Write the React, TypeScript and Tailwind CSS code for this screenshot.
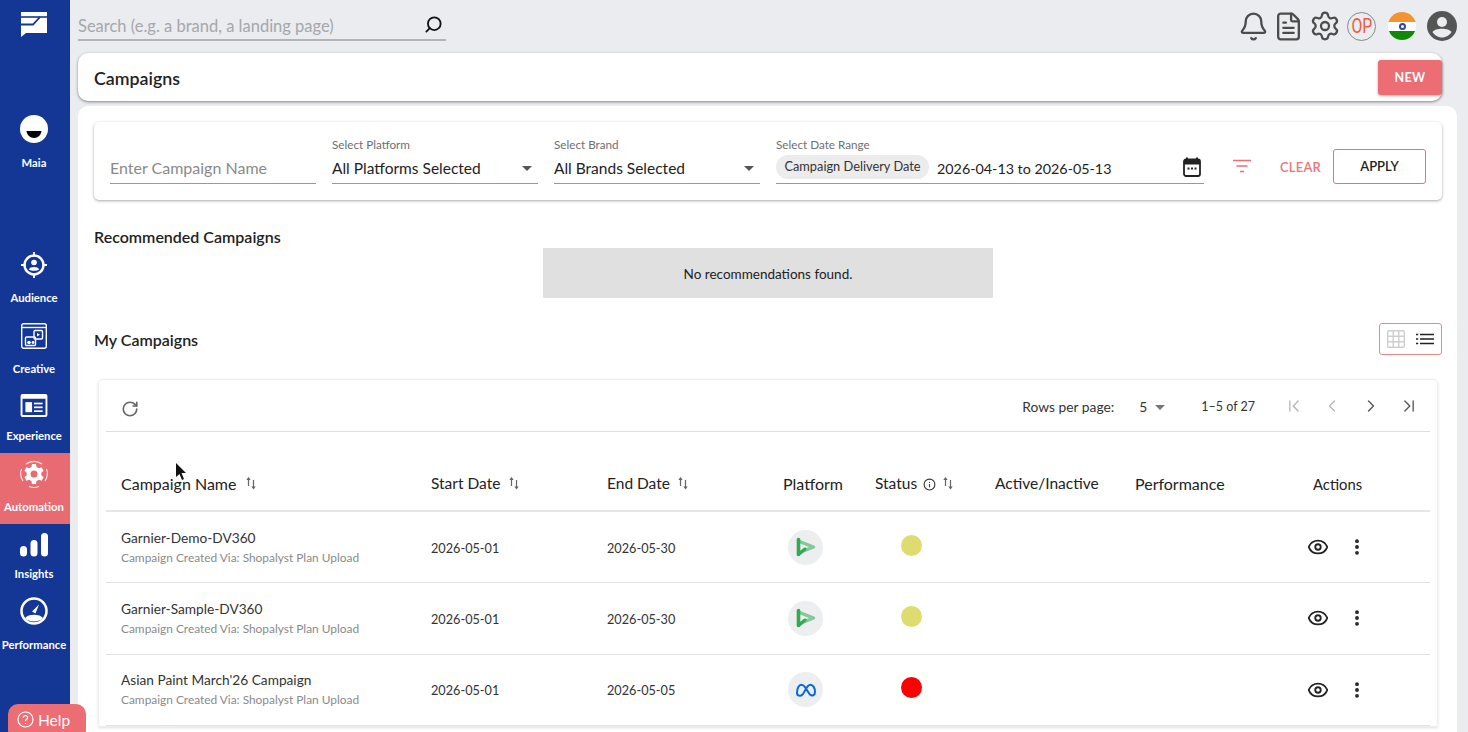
import React from "react";
import { Bell, FileText, Settings, Search, RotateCw, ChevronLeft, ChevronRight, ChevronFirst, ChevronLast, Eye, EllipsisVertical, Info } from "lucide-react";

const Logo = () => (
  <svg width="26" height="25" viewBox="0 0 26 25">
    <path d="M0 0H26V21H5L0 25Z" fill="white" />
    <path d="M0 5H26" stroke="#143694" strokeWidth="1.600" />
    <path d="M19 5L12 12.500H0" fill="none" stroke="#143694" strokeWidth="1.800" />
  </svg>
);
const Maia = () => (
  <svg width="28" height="28" viewBox="0 0 28 28">
    <circle cx="14" cy="14" r="14" fill="white" />
    <path d="M6.500 16H21.500C21 20 18 23 14 23C10 23 7 20 6.500 16Z" fill="black" />
  </svg>
);
const Audience = () => (
  <svg width="26" height="26" viewBox="0 0 26 26" fill="none" stroke="white">
    <circle cx="13" cy="13" r="9.500" strokeWidth="2.400" />
    <path d="M13 0V4.500M13 21.500V26M0 13H4.500M21.500 13H26" strokeWidth="1.800" />
    <circle cx="13" cy="10.500" r="2.800" fill="white" stroke="none" />
    <path d="M7.800 17.500C8.800 14.200 17.200 14.200 18.200 17.500C16 19.300 10 19.300 7.800 17.500Z" fill="white" stroke="none" />
  </svg>
);
const Creative = () => (
  <svg width="26" height="26" viewBox="0 0 26 26" fill="none" stroke="white" strokeWidth="1.400">
    <rect x="0.700" y="0.700" width="24.600" height="24.600" rx="2" />
    <path d="M1 4.500H25" />
    <rect x="13" y="7.500" width="8.500" height="8.500" rx="1" />
    <path d="M16 10L19 11.800L16 13.600Z" fill="white" stroke="none" />
    <rect x="4.500" y="14" width="10" height="8.500" rx="1" />
    <circle cx="8" cy="19.500" r="1.800" fill="white" stroke="none" />
    <circle cx="12" cy="19.500" r="1.400" fill="white" stroke="none" />
  </svg>
);
const Experience = () => (
  <svg width="28" height="23" viewBox="0 0 28 24" fill="white">
    <path fillRule="evenodd" d="M2 0H26A2 2 0 0 1 28 2V22A2 2 0 0 1 26 24H2A2 2 0 0 1 0 22V2A2 2 0 0 1 2 0ZM2 5V22H26V5Z" />
    <rect x="5" y="8.500" width="7" height="10.500" />
    <rect x="14" y="9" width="9" height="1.800" />
    <rect x="14" y="13" width="9" height="1.800" />
    <rect x="14" y="17" width="9" height="1.800" />
  </svg>
);
const Automation = () => (
  <svg width="30" height="30" viewBox="0 0 30 30" fill="none">
    <path d="M7 5A13.500 13.500 0 0 1 23 5M27.500 10A13.500 13.500 0 0 1 26 22M4 22A13.500 13.500 0 0 1 2.500 10M10 27.500A13.500 13.500 0 0 0 20 27.500" stroke="white" strokeWidth="1.100" strokeOpacity="0.850" />
    <path fill="white" fillRule="evenodd" d="M13 5H17L17.600 8A7.500 7.500 0 0 1 19.600 9.200L22.600 8.200L24.600 11.700L22.300 13.700A7.500 7.500 0 0 1 22.300 16.300L24.600 18.300L22.600 21.800L19.600 20.800A7.500 7.500 0 0 1 17.600 22L17 25H13L12.400 22A7.500 7.500 0 0 1 10.400 20.800L7.400 21.800L5.400 18.300L7.700 16.300A7.500 7.500 0 0 1 7.700 13.700L5.400 11.700L7.400 8.200L10.400 9.200A7.500 7.500 0 0 1 12.400 8ZM15 11.500A3.500 3.500 0 1 0 15 18.500A3.500 3.500 0 1 0 15 11.500Z" />
  </svg>
);
const Insights = () => (
  <svg width="28" height="24" viewBox="0 0 28 24" fill="white">
    <rect x="0" y="13" width="7" height="10.500" rx="3.500" />
    <rect x="10.500" y="7" width="7" height="16.500" rx="3.500" />
    <rect x="21" y="0" width="7" height="23.500" rx="3.500" />
  </svg>
);
const Perf = () => (
  <svg width="28" height="28" viewBox="0 0 28 28" fill="none">
    <circle cx="14" cy="14" r="12.500" stroke="white" strokeWidth="2.600" />
    <path d="M5 21C8 16.500 20 16.500 23 21C20 25.500 8 25.500 5 21Z" fill="white" />
    <path d="M12 14.500L19 7.500L15.500 16.500Z" fill="white" />
  </svg>
);

const SortIcon = () => (
  <svg width="12" height="15" viewBox="0 0 12 15" fill="none" stroke="#666" strokeWidth="1.200" className="-translate-y-[1px]">
    <path d="M3.500 10V2" />
    <path d="M1.300 4L3.500 1L5.700 4Z" fill="#666" stroke="none" />
    <path d="M8.500 4V12" />
    <path d="M6.300 10.500L8.500 13.500L10.700 10.500Z" fill="#666" stroke="none" />
  </svg>
);
const Dv = () => (
  <svg width="22" height="22" viewBox="0 0 22 22">
    <path d="M4.500 5.500L18.500 11L4.500 16.500" fill="none" stroke="#81c995" strokeWidth="3.400" strokeLinejoin="round" strokeLinecap="round" />
    <path d="M3.500 3.500V18.500" stroke="#34a853" strokeWidth="3.600" strokeLinecap="round" />
    <path d="M3.500 18.500L10 13" stroke="#34a853" strokeWidth="3" strokeLinecap="round" />
  </svg>
);
const Meta = () => (
  <svg width="22" height="14" viewBox="0 0 22 14" fill="none">
    <path d="M2 10C2 5 4 1.800 6.500 1.800C10 1.800 12.500 9 15 11.500C17 13.300 20 12.500 20 9C20 5 18 1.800 15.500 1.800C11.500 1.800 10 9 7.500 11.500C5.500 13.500 2 13 2 10Z" stroke="#0668e1" strokeWidth="2" />
  </svg>
);
const Cal = () => (
  <svg width="18" height="20" viewBox="0 0 18 20">
    <path d="M4 0.500V3M14 0.500V3" stroke="#222" strokeWidth="2" />
    <rect x="1" y="2.500" width="16" height="16.500" rx="2" fill="none" stroke="#222" strokeWidth="1.800" />
    <rect x="1" y="2.500" width="16" height="5" fill="#222" />
    <path d="M4.500 11.500H6.500M8 11.500H10M11.500 11.500H13.500" stroke="#222" strokeWidth="2" />
  </svg>
);

const Caret = ({ c = "#555" }: { c?: string }) => (
  <div className="h-0 w-0 border-l-[5px] border-r-[5px] border-t-[5px] border-l-transparent border-r-transparent" style={{ borderTopColor: c }} />
);

const navs = [
  { l: "Audience", I: Audience, h: "h-[71px]", g: "mb-[13px]" },
  { l: "Creative", I: Creative, h: "h-[71px]", g: "mb-[13px]" },
  { l: "Experience", I: Experience, h: "h-[67px]", g: "mb-[12px]" },
  { l: "Automation", I: Automation, h: "h-[71px] bg-[#e76b71]", g: "mb-[11px]" },
  { l: "Insights", I: Insights, h: "h-[67px]", g: "mb-[10px]" },
  { l: "Performance", I: Perf, h: "h-[71px]", g: "mb-[13px]" },
];

const rows = [
  { n: "Garnier-Demo-DV360", e: "2026-05-30", p: "dv", c: "bg-[#dedc6f]" },
  { n: "Garnier-Sample-DV360", e: "2026-05-30", p: "dv", c: "bg-[#dedc6f]" },
  { n: "Asian Paint March'26 Campaign", e: "2026-05-05", p: "meta", c: "bg-[#ff0000]" },
];

const cols = "grid grid-cols-[325px_176px_177px_91px_120px_140px_178px_1fr]";

export default function App() {
  return (
    <div className="relative flex h-[732px] w-[1468px] overflow-hidden bg-[#eaecf0] font-['Lato',sans-serif] text-[#222]">
      <aside className="flex w-[70px] shrink-0 flex-col bg-[#143694] text-white">
        <div className="flex h-[109px] justify-center pr-[2px] pt-[12px]"><Logo /></div>
        <div className="flex h-[71px] flex-col items-center justify-end pb-[10px] pr-[2px]">
          <div className="mb-[13px]"><Maia /></div>
          <span className="text-[11.300px] font-bold leading-[14px]">Maia</span>
        </div>
        <div className="h-[64px]" />
        {navs.map(({ l, I, h, g }) => (
          <div key={l} className={`flex flex-col items-center justify-end pb-[10px] pr-[2px] ${h}`}>
            <div className={g}><I /></div>
            <span className="text-[11.300px] font-bold leading-[14px]">{l}</span>
          </div>
        ))}
      </aside>

      <main className="flex min-w-0 flex-1 flex-col pl-[8px]">
        <header className="flex h-[53px] shrink-0 items-start justify-between pr-[11px]">
          <div className="mt-[13px] flex h-[28px] w-[368px] items-center justify-between border-b-2 border-[#b4b4b6] pr-[3px]">
            <span className="text-[16.500px] text-[#a5a7aa]">Search (e.g. a brand, a landing page)</span>
            <Search size={19} strokeWidth={2.300} className="mb-[3px] -scale-x-100 text-[#111]" />
          </div>
          <div className="mt-[10px] flex items-center">
            <Bell size={31} strokeWidth={1.800} className="text-[#4c4c4c]" />
            <FileText size={31} strokeWidth={1.800} className="ml-[4px] text-[#4c4c4c]" />
            <Settings size={32} strokeWidth={1.700} className="ml-[5px] text-[#4c4c4c]" />
            <div className="ml-[6px] flex h-[29px] w-[29px] items-center justify-center rounded-full border border-[#888] font-['Roboto',sans-serif] text-[21px] font-normal leading-none text-[#ee5a3e]"><span className="scale-x-75">OP</span></div>
            <div className="ml-[12px] flex h-[28px] w-[28px] flex-col overflow-hidden rounded-full">
              <div className="h-[10px] bg-[#f59331]" />
              <div className="flex h-[9px] items-center justify-center bg-white"><div className="h-[7px] w-[7px] rounded-full border-2 border-[#2e4a9e]" /></div>
              <div className="h-[9px] bg-[#128807]" />
            </div>
            <svg className="ml-[11px]" width="30" height="30" viewBox="0 0 30 30">
              <circle cx="15" cy="15" r="15" fill="#555" />
              <circle cx="15" cy="11" r="5" fill="#eaecf0" />
              <path d="M5.500 21C8 16.500 22 16.500 24.500 21C22 25 18 26.500 15 26.500C12 26.500 8 25 5.500 21Z" fill="#eaecf0" />
            </svg>
          </div>
        </header>

        <div className="mr-[26px] flex h-[48px] shrink-0 items-center justify-between rounded-[10px] bg-white pl-[16px] shadow-[0_1px_3px_rgba(0,0,0,0.45)]">
          <h1 className="pt-[2px] text-[17.800px] font-semibold text-[#222]">Campaigns</h1>
          <button className="h-[35px] w-[64px] rounded-[3px] bg-[#ec6d74] pt-[2px] text-[12.500px] font-bold tracking-[0.3px] text-white shadow-[0_1px_3px_rgba(0,0,0,0.3)]">NEW</button>
        </div>

        <div className="mr-[11px] mt-[5px] min-h-0 flex-1 overflow-hidden rounded-t-[10px] bg-white pl-[16px] pr-[15px] pt-[16px]">
          <section className="flex h-[78px] items-start rounded-[5px] bg-white pl-[16px] shadow-[0_1px_3px_rgba(0,0,0,0.35)]">
            <div className="mt-[28px] flex h-[34px] w-[206px] items-center border-b border-[#999] pt-[3px] text-[16px] text-[#8a8a8a]">Enter Campaign Name</div>
            <div className="ml-[16px] mt-[15px] w-[206px]">
              <div className="text-[11.700px] leading-[14px] text-[#6f6f6f]">Select Platform</div>
              <div className="flex h-[33px] items-center justify-between border-b border-[#999] pr-[6px] pt-[3px] text-[15.500px] text-[#222]">All Platforms Selected <Caret /></div>
            </div>
            <div className="ml-[16px] mt-[15px] w-[206px]">
              <div className="text-[11.700px] leading-[14px] text-[#6f6f6f]">Select Brand</div>
              <div className="flex h-[33px] items-center justify-between border-b border-[#999] pr-[6px] pt-[3px] text-[15.500px] text-[#222]">All Brands Selected <Caret /></div>
            </div>
            <div className="ml-[16px] mt-[15px] w-[428px]">
              <div className="text-[11.700px] leading-[14px] text-[#6f6f6f]">Select Date Range</div>
              <div className="flex h-[33px] items-center border-b border-[#999] pr-[3px] text-[14.300px] text-[#222]">
                <span className="flex h-[24px] w-[153px] items-center justify-center rounded-full bg-[#ececec] text-[12.800px] text-[#333]">Campaign Delivery Date</span>
                <span className="ml-[8px] flex-1 pt-[3px]">2026-04-13 to 2026-05-13</span>
                <Cal />
              </div>
            </div>
            <svg className="ml-[28px] mt-[37px]" width="20" height="14" viewBox="0 0 20 14" stroke="#ec6d74" strokeWidth="1.700"><path d="M1 1.500H19M4.500 7H15.500M8 12.500H12" /></svg>
            <button className="ml-[28px] mt-[36px] text-[13px] font-semibold tracking-[0.2px] text-[#e9767b]">CLEAR</button>
            <button className="ml-[12px] mt-[27px] h-[35px] w-[93px] rounded-[3px] border border-[#d8787c] text-[13px] font-semibold text-[#222]">APPLY</button>
          </section>

          <h2 className="mt-[27px] text-[16px] font-semibold leading-[20px] text-[#222]">Recommended Campaigns</h2>
          <div className="ml-[449px] mt-[1px] flex h-[50px] w-[450px] items-center justify-center bg-[#e0e0e0] pt-[2px] text-[13.500px] text-[#222]">No recommendations found.</div>

          <div className="mt-[25px] flex h-[32px] items-center justify-between">
            <h2 className="pt-[2px] text-[16px] font-semibold text-[#222]">My Campaigns</h2>
            <div className="flex h-[32px] w-[63px] items-center justify-center gap-[11px] rounded-[3px] border border-[#e58a8e]">
              <svg width="18" height="18" viewBox="0 0 18 18" fill="none" stroke="#cfcfcf" strokeWidth="1.400"><rect x="0.700" y="0.700" width="16.600" height="16.600" rx="1" /><path d="M6.200 1V17M11.800 1V17M1 6.200H17M1 11.800H17" /></svg>
              <svg width="18" height="12" viewBox="0 0 18 12" stroke="#222" strokeWidth="1.700"><path d="M4 1.500H18M4 6H18M4 10.500H18M0 1.500H2.200M0 6H2.200M0 10.500H2.200" /></svg>
            </div>
          </div>

          <section className="ml-[4px] mr-[4px] mt-[24px] rounded-t-[5px] border border-[#eeeeee] px-[7px] shadow-[0_1px_3px_rgba(0,0,0,0.12)]">
            <div className="flex h-[52px] items-center justify-between border-b border-[#dedede] pl-[15px]">
              <RotateCw size={18} strokeWidth={2.200} className="mt-[6px] text-[#666]" />
              <div className="mt-[4px] flex items-center text-[13.800px] text-[#333]">
                <span>Rows per page:</span>
                <span className="ml-[25px]">5</span>
                <span className="ml-[8px]"><Caret c="#777" /></span>
                <span className="ml-[36px] text-[12.500px]">1–5 of 27</span>
                <ChevronFirst size={20} strokeWidth={1.600} className="-mt-[4px] ml-[29px] text-[#b5b5b5]" />
                <ChevronLeft size={20} strokeWidth={1.600} className="-mt-[4px] ml-[18px] text-[#b5b5b5]" />
                <ChevronRight size={20} strokeWidth={1.600} className="-mt-[4px] ml-[19px] text-[#555]" />
                <ChevronLast size={20} strokeWidth={1.600} className="-mt-[4px] ml-[18px] mr-[11px] text-[#555]" />
              </div>
            </div>
            <div className={`${cols} h-[80px] items-center border-b-2 border-[#e6e6e6] pl-[15px] pt-[26px] text-[15.500px] text-[#222]`}>
              <span className="flex items-center gap-[9px] text-[16px]">Campaign Name <SortIcon /></span>
              <span className="-ml-[15px] flex items-center gap-[8px]">Start Date <SortIcon /></span>
              <span className="-ml-[15px] flex items-center gap-[7px]">End Date <SortIcon /></span>
              <span className="-ml-[16px] text-[16px]">Platform</span>
              <span className="-ml-[15px] flex items-center gap-[6px]">Status <Info size={13} className="text-[#333]" /><SortIcon /></span>
              <span className="-ml-[15px]">Active/Inactive</span>
              <span className="-ml-[15px] text-[16px]">Performance</span>
              <span className="-ml-[15px] text-[14.800px]">Actions</span>
            </div>
            {rows.map((r) => (
              <div key={r.n} className={`${cols} h-[71.300px] items-center border-b border-[#e2e2e2] pl-[15px] text-[12.700px] text-[#333]`}>
                <div>
                  <div className="text-[13.700px] leading-[18px] text-[#333]">{r.n}</div>
                  <div className="mt-[3px] text-[11.900px] leading-[16px] text-[#8a8a8a]">Campaign Created Via: Shopalyst Plan Upload</div>
                </div>
                <span className="-ml-[15px] pt-[2px]">2026-05-01</span>
                <span className="-ml-[15px] pt-[2px]">{r.e}</span>
                <div className="-ml-[11px] flex h-[35px] w-[35px] items-center justify-center rounded-full bg-[#eceeef]">{r.p === "dv" ? <Dv /> : <Meta />}</div>
                <div className={`mb-[4px] ml-[11px] h-[21px] w-[21px] rounded-full ${r.c}`} />
                <span /><span />
                <div className="-ml-[21px] flex items-center">
                  <Eye size={22} strokeWidth={2} className="text-[#222]" />
                  <EllipsisVertical size={20} strokeWidth={2.600} className="ml-[18px] text-[#222]" />
                </div>
              </div>
            ))}
          </section>
        </div>
      </main>

      <svg className="absolute left-[175px] top-[463px]" width="12" height="18" viewBox="0 0 12 18"><path d="M1 0V14L4.500 11L7 17L9 16L6.500 10H11Z" fill="#111" /></svg>

      <div className="absolute left-[8px] top-[704px] flex h-[36px] w-[78px] items-start gap-[4px] rounded-[10px] bg-[#ec6d74] pl-[9px] pt-[7px] text-[15.500px] text-white">
        <svg width="17" height="17" viewBox="0 0 17 17" fill="none" stroke="white" strokeWidth="1.200"><circle cx="8.500" cy="8.500" r="7.500" /><path d="M6.300 6.700C6.300 4 10.700 4 10.700 6.700C10.700 8.300 8.500 8.300 8.500 10" /><path d="M8.500 12V13" /></svg>
        <span className="leading-[18px]">Help</span>
      </div>
    </div>
  );
}
